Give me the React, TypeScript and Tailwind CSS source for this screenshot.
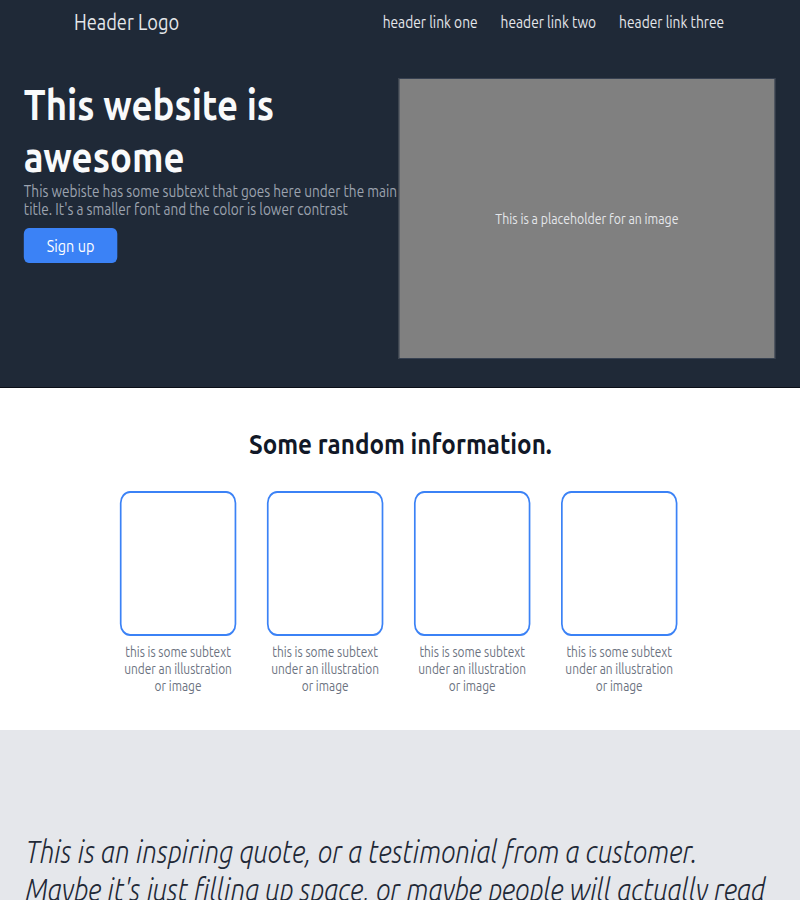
const CARDS = [1, 2, 3, 4];

export default function App() {
  return (
    <div className="w-full overflow-hidden font-['Ubuntu','Lato',sans-serif]">
      {/* the reference is a horizontally squeezed capture, so the page is laid out wider and scaled on x */}
      <div className="w-[942px] origin-top-left scale-x-[0.85]">
        {/* Hero */}
        <div className="bg-[#1f2937] border-b border-[#0b0f17]">
          <div className="flex items-center justify-between pl-[87px] pr-[90px] h-[44px]">
            <div className="text-[21.5px] text-[#e5e7eb]">Header Logo</div>
            <div className="flex gap-[27px] text-[16.2px] text-[#e5e7eb]">
              <a>header link one</a>
              <a>header link two</a>
              <a>header link three</a>
            </div>
          </div>
          <div className="flex pl-[28px] pr-[30px] pt-[34px] pb-[28px]">
            <div className="flex-1">
              <h1 className="text-[43px] leading-[52px] font-bold text-[#f9fafb]">This website is awesome</h1>
              <p className="text-[16px] leading-[18px] text-[#9ca3af]">
                This webiste has some subtext that goes here under the main title. It's a smaller font and the color is lower contrast
              </p>
              <button className="mt-[10px] w-[110px] h-[35px] rounded-md bg-[#3b82f6] text-white text-[17px]">Sign up</button>
            </div>
            <div className="flex-1 h-[281px] bg-[#808080] border border-[#374151] flex items-center justify-center text-[14.5px] text-[#e5e7eb]">
              This is a placeholder for an image
            </div>
          </div>
        </div>

        {/* Info */}
        <div className="bg-white pt-[38px] pb-[35px]">
          <h2 className="text-center text-[28.5px] leading-[34px] font-bold text-[#111827]">Some random information.</h2>
          <div className="mt-[31px] flex justify-center gap-[36.5px] pr-[4px]">
            {CARDS.map((c) => (
              <div key={c} className="w-[136.5px] flex flex-col items-center">
                <div className="w-full h-[145px] border-2 border-[#3b82f6] rounded-xl"></div>
                <p className="mt-[8px] text-center text-[14px] leading-[17px] text-[#6b7280]">
                  this is some subtext under an illustration or image
                </p>
              </div>
            ))}
          </div>
        </div>

        {/* Quote */}
        <div className="bg-[#e5e7eb] pt-[103px] pb-16 pl-[30px] pr-[30px]">
          <p className="text-[31.3px] leading-[38px] italic font-light text-[#1f2937]">
            This is an inspiring quote, or a testimonial from a customer. Maybe it's just filling up space, or maybe people will actually read it. Who knows? All I know is that it looks cool.
          </p>
        </div>
      </div>
    </div>
  );
}
